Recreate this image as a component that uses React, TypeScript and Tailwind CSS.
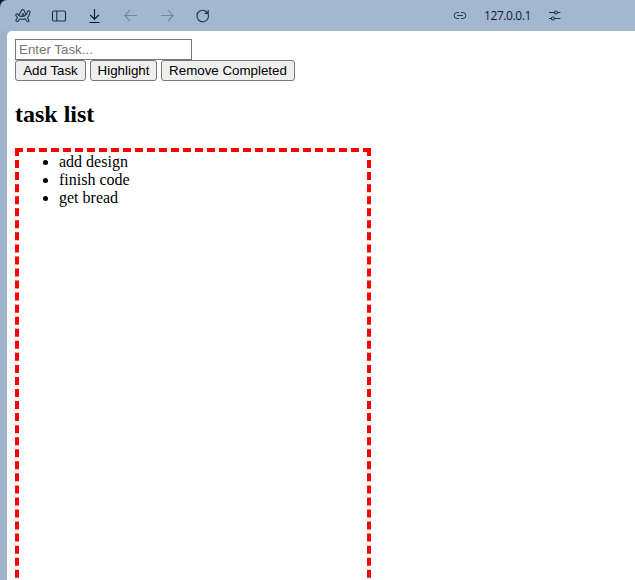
const button =
  "h-[21px] shrink-0 rounded-[3px] border border-[#767676] bg-[#efefef] p-0 text-center font-['Liberation_Sans',Arial,sans-serif] text-[13.333px] leading-[19px] whitespace-nowrap text-black";

function Toolbar() {
  return (
    <header className="flex h-[31px] shrink-0 items-center pt-px text-[#20334f]">
      <svg className="ml-[14px] h-4 w-[18px] shrink-0" viewBox="0 0 18 16" fill="none" stroke="currentColor" strokeWidth="1.1" strokeLinejoin="round" strokeLinecap="round">
        <path d="M3.6 9.6C2.6 8.8 2 8 1.8 7.2c-.2-1.5 1.9-1.8 2.4-.6C5 8.2 6.8 8.6 8.2 8.4 11 8 13 6 13.6 3.6c.5-1.3 2.6-.8 2.4.6-.4 2.4-1.2 4.1-2.4 5.6l1.4 2.4c.4 1-1.6 2-2.4.8l-1.1-2.2c-1.8.7-3.9.8-5.9.2L4.3 13C3.4 14 1.5 13 2 12z" />
        <path d="m4.9 7.3 2.7-5.1q1.2-1.3 2.4 0l2 4.2M7.7 8.4l1.2-3 1.3 2.4" />
      </svg>
      <svg className="ml-[19px] h-4 w-4 shrink-0" viewBox="0 0 16 16" fill="none" stroke="currentColor" strokeWidth="1.15">
        <rect x="1.5" y="3" width="13" height="10" rx="1.6" />
        <path d="M5.8 3v10" />
      </svg>
      <svg className="ml-5 h-4 w-4 shrink-0" viewBox="0 0 16 16" fill="none" stroke="#071832" strokeWidth="1.1">
        <path d="M7.5 1v10M3.2 7l4.3 4.2L11.8 7M2.5 14.5h10" />
      </svg>
      <svg className="ml-5 h-4 w-4 shrink-0" viewBox="0 0 16 16" fill="none" stroke="#6f87a5" strokeWidth="1.1">
        <path d="M14 7.5H2M7 2.2 1.8 7.5 7 12.8" />
      </svg>
      <svg className="ml-5 h-4 w-4 shrink-0" viewBox="0 0 16 16" fill="none" stroke="#6f87a5" strokeWidth="1.1">
        <path d="M2 7.5h12M9 2.2l5.2 5.3L9 12.8" />
      </svg>
      <svg className="ml-5 h-4 w-4 shrink-0" viewBox="0 0 16 16" fill="none" stroke="currentColor" strokeWidth="1.15">
        <path d="M12.9 5.4A5.8 5.8 0 1 1 10 2.7l2.7 2M13.2 1.9v3.5H9.6" />
      </svg>
      <svg className="ml-[241px] h-4 w-4 shrink-0" viewBox="0 0 16 16" fill="none" stroke="currentColor" strokeWidth="1">
        <path d="M7 4.5H5.2a3 3 0 0 0 0 6H7M9 4.5h1.8a3 3 0 0 1 0 6H9M5.3 7.5h5.4" />
      </svg>
      <span className="ml-4 w-[47px] shrink-0 font-['Open_Sans','Noto_Sans',sans-serif] text-xs leading-4 tracking-[-0.42px] whitespace-nowrap text-[#0d1d36]">127.0.0.1</span>
      <svg className="ml-4 h-4 w-4 shrink-0" viewBox="0 0 16 16" fill="none" stroke="currentColor" strokeWidth="1.1">
        <path d="M2 4.5h5.2m3.4 0h2.9M2 10.5h2.2m3.4 0h5.9" />
        <circle cx="8.9" cy="4.5" r="1.5" />
        <circle cx="5.9" cy="10.5" r="1.5" />
      </svg>
    </header>
  );
}

export default function App() {
  return (
    <div className="h-[580px] w-[635px] overflow-hidden bg-[#1c1c1c]">
      <div className="flex h-full flex-col rounded-tl-[7px] bg-[#a3b8d0]">
        <Toolbar />
        <div className="flex min-h-0 flex-1 bg-linear-to-r from-[#9fb4cc] to-[#a3b8d0] pl-[7px]">
          <main className="min-w-0 flex-1 overflow-hidden rounded-tl-[5px] bg-white pt-2 pl-2 font-['Liberation_Serif','Times_New_Roman',serif] text-black">
            <input
              className="block h-[21px] w-[177px] border border-[#767676] bg-white px-[3px] py-0 font-['Liberation_Sans',Arial,sans-serif] text-[13.333px] leading-[17px] placeholder:text-[#757575]"
              placeholder="Enter Task..."
            />
            <div className="flex gap-1">
              <button className={`${button} w-[71px]`}>Add Task</button>
              <button className={`${button} w-[67px]`}>Highlight</button>
              <button className={`${button} w-[134px]`}>Remove Completed</button>
            </div>
            <h2 className="mt-5 mb-5 text-2xl leading-[27px] font-bold">task list</h2>
            <ul className="h-[490px] w-[356px] list-disc border-4 border-dashed border-[#ff0000] pt-px pl-10 text-base leading-[18px]">
              <li>add design</li>
              <li>finish code</li>
              <li>get bread</li>
            </ul>
          </main>
        </div>
      </div>
    </div>
  );
}
